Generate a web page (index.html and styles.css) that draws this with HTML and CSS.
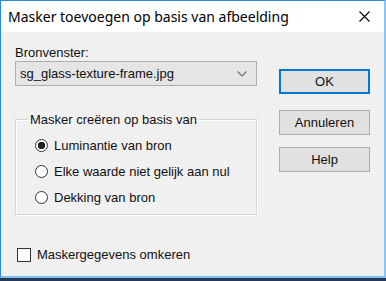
FILE: index.html
```html
<!DOCTYPE html>
<html lang="nl">
<head>
    <meta charset="UTF-8">
    <title>Masker toevoegen op basis van afbeelding</title>
    <link rel="stylesheet" href="styles.css">
</head>
<body>
    <div class="window">
        <div class="titlebar">
            <span class="title">Masker toevoegen op basis van afbeelding</span>
            <svg class="close" width="11" height="11" viewBox="0 0 11 11">
                <path d="M0.5 0.5 L10.5 10.5 M10.5 0.5 L0.5 10.5" stroke="#000" stroke-width="1.1" fill="none"/>
            </svg>
        </div>

        <div class="content">
            <div class="main">
                <div class="left">
                    <div class="label">Bronvenster:</div>
                    <div class="combo">
                        <span>sg_glass-texture-frame.jpg</span>
                        <svg width="10" height="6" viewBox="0 0 10 6">
                            <polyline points="0.5,0.5 5,5 9.5,0.5" stroke="#707070" stroke-width="1.2" fill="none"/>
                        </svg>
                    </div>

                    <fieldset class="group">
                        <legend>Masker creëren op basis van</legend>
                        <div class="radio-row"><span class="radio checked"></span>Luminantie van bron</div>
                        <div class="radio-row"><span class="radio"></span>Elke waarde niet gelijk aan nul</div>
                        <div class="radio-row"><span class="radio"></span>Dekking van bron</div>
                    </fieldset>
                </div>

                <div class="buttons">
                    <div class="btn default">OK</div>
                    <div class="btn">Annuleren</div>
                    <div class="btn">Help</div>
                </div>
            </div>

            <div class="check-row"><span class="checkbox"></span>Maskergegevens omkeren</div>
        </div>
    </div>
</body>
</html>
```

FILE: styles.css
```css
body {
    margin: 0;
    width: 386px;
    height: 281px;
    background-color: #24385a;
    font-family: "Liberation Sans", Arial, sans-serif;
    font-size: 13px;
    color: #111;
}

.window {
    box-sizing: border-box;
    width: 386px;
    height: 278px;
    border: 1px solid #2d89dc;
    border-right: 2px solid #8cc6ef;
    border-bottom: 2px solid #7fbde9;
    background-color: #f0f0f0;
    display: flex;
    flex-direction: column;
}

.titlebar {
    height: 31px;
    background-color: #fff;
    display: flex;
    align-items: center;
    justify-content: space-between;
    padding: 0 14px 0 7px;
}

.title {
    font-family: "Noto Sans", sans-serif;
    font-size: 14px;
    color: #000;
}

.close {
    display: block;
}

.content {
    padding: 13px 0 0 14px;
}

.main {
    display: flex;
}

.left {
    width: 242px;
}

.label {
    line-height: 15px;
    margin-bottom: 1px;
}

.combo {
    height: 25px;
    box-sizing: border-box;
    border: 1px solid #adadad;
    background-color: #e5e5e5;
    display: flex;
    align-items: center;
    justify-content: space-between;
    padding: 0 9px 0 4px;
}

.group {
    margin: 26px 0 0 0;
    padding: 5px 0 10px 19px;
    border: 1px solid #d5d5d5;
    box-shadow: inset 1px 1px #fff, 1px 1px #fff;
    height: 103px;
    box-sizing: border-box;
}

.group legend {
    margin-left: -7px;
    padding: 0 2px;
}

.radio-row {
    display: flex;
    align-items: center;
    height: 26px;
}

.radio {
    width: 13px;
    height: 13px;
    box-sizing: border-box;
    border: 1px solid #333;
    border-radius: 50%;
    background-color: #fff;
    margin-right: 6px;
}

.radio.checked {
    background: radial-gradient(circle, #222 0, #222 3.5px, #fff 4px);
}

.buttons {
    margin-left: 22px;
    padding-top: 24px;
    width: 91px;
    display: flex;
    flex-direction: column;
    gap: 12px;
}

.btn {
    height: 25px;
    box-sizing: border-box;
    border: 1px solid #adadad;
    background-color: #e1e1e1;
    display: flex;
    align-items: center;
    justify-content: center;
}

.btn.default {
    border-color: #0078d7;
    box-shadow: inset 0 0 0 1px #0078d7;
    margin-bottom: 4px;
}

.check-row {
    display: flex;
    align-items: center;
    margin-top: 32px;
    margin-left: 2px;
}

.checkbox {
    width: 14px;
    height: 14px;
    box-sizing: border-box;
    border: 1px solid #333;
    background-color: #fff;
    margin-right: 6px;
}
```
